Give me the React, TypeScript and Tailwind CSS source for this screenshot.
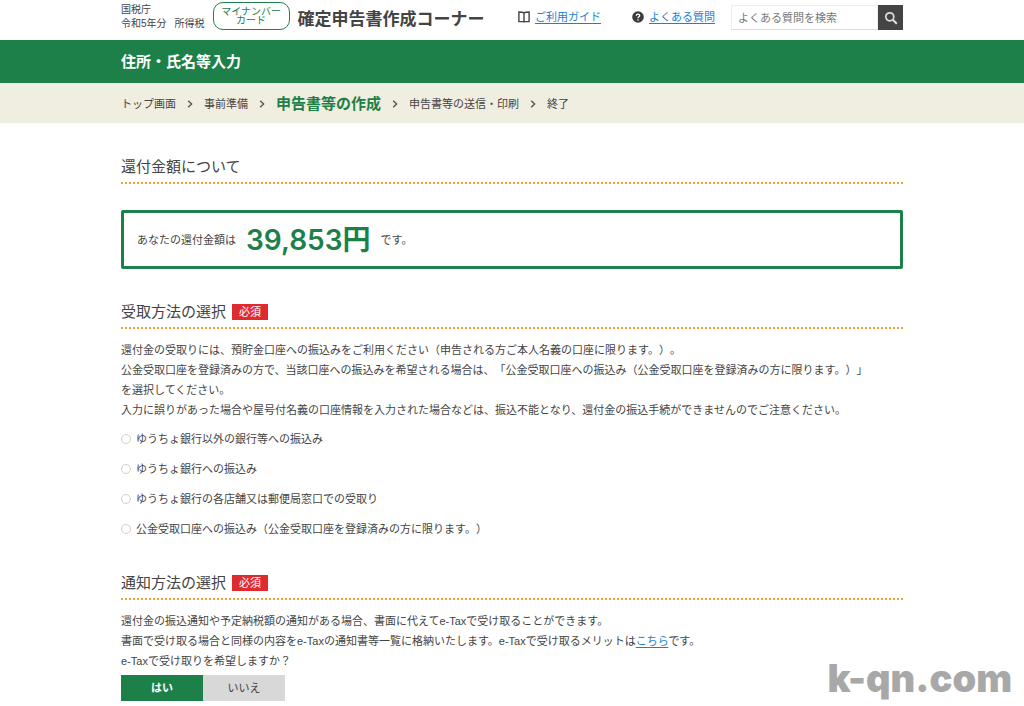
import { useState } from "react";
import type { ReactNode } from "react";

const STEPS = ["トップ画面", "事前準備", "申告書等の作成", "申告書等の送信・印刷", "終了"];
const CURRENT_STEP = 2;

const RECEIVE_METHODS = [
  "ゆうちょ銀行以外の銀行等への振込み",
  "ゆうちょ銀行への振込み",
  "ゆうちょ銀行の各店舗又は郵便局窓口での受取り",
  "公金受取口座への振込み（公金受取口座を登録済みの方に限ります。）",
];

function Container({ children, className = "" }: { children: ReactNode; className?: string }) {
  return <div className={`mx-auto w-full max-w-[782px] ${className}`}>{children}</div>;
}

function BookIcon() {
  return (
    <svg width="12" height="12" viewBox="0 0 12 12" fill="none" stroke="#444" strokeWidth="1.4" aria-hidden="true">
      <path d="M6 2C5.2 1.2 4 1 0.9 1V10.6H4.4C5.4 10.6 6 11 6 11.6C6 11 6.6 10.6 7.6 10.6H11.1V1C8 1 6.8 1.2 6 2ZM6 2V11.6" />
    </svg>
  );
}

function QuestionIcon() {
  return (
    <svg width="12" height="12" viewBox="0 0 12 12" aria-hidden="true">
      <circle cx="6" cy="6" r="5.8" fill="#3c3c3c" />
      <path d="M4.3 4.7C4.3 2.6 7.7 2.6 7.7 4.6C7.7 5.8 6 5.8 6 7.2" fill="none" stroke="#fff" strokeWidth="1.3" />
      <circle cx="6" cy="9" r="0.8" fill="#fff" />
    </svg>
  );
}

function SearchIcon() {
  return (
    <svg width="14" height="14" viewBox="0 0 14 14" fill="none" stroke="#dedede" aria-hidden="true">
      <circle cx="5.8" cy="5.8" r="4" strokeWidth="1.7" />
      <path d="M8.8 8.8L12.8 12.8" strokeWidth="2.2" />
    </svg>
  );
}

function Chevron() {
  return (
    <svg width="6" height="8" viewBox="0 0 6 8" fill="none" stroke="#555" strokeWidth="1.4" aria-hidden="true">
      <path d="M1.2 0.8L4.6 4L1.2 7.2" />
    </svg>
  );
}

function SectionTitle({ children, required }: { children: ReactNode; required?: boolean }) {
  return (
    <h2 className="flex items-center gap-[6px] border-b-2 border-dotted border-[#efa136] pb-[3px] text-[15px] leading-6">
      {children}
      {required && (
        <span className="bg-[#df2b2f] px-[7px] text-[11px] leading-4 text-white">必須</span>
      )}
    </h2>
  );
}

export default function App() {
  const [method, setMethod] = useState<string | null>(null);
  const [notify, setNotify] = useState(true);

  return (
    <div className="relative bg-white font-['Liberation_Sans','Noto_Sans_CJK_JP',sans-serif] text-[11px] leading-5 text-[#444] [text-spacing-trim:space-all]">
      <header>
        <Container className="flex h-10 items-start">
          <div className="pt-[3px] text-[10px] leading-[14px]">
            <p>国税庁</p>
            <p className="flex gap-2">
              <span>令和5年分</span>
              <span>所得税</span>
            </p>
          </div>
          <p className="mt-[2px] ml-2 flex h-7 w-[77px] flex-col items-center justify-center rounded-[10px] border border-[#1d8049] text-[10px] leading-[9px] text-[#1d8049]">
            <span>マイナンバー</span>
            <span>カード</span>
          </p>
          <h1 className="ml-2 pt-2 text-[17px] leading-6 font-bold">確定申告書作成コーナー</h1>
          <div className="ml-auto flex items-start">
            <nav className="flex gap-[31px] pt-[7px] text-[#1a80d0]">
              <a href="#guide" className="flex items-center gap-[5px]">
                <BookIcon />
                <span className="underline underline-offset-2">ご利用ガイド</span>
              </a>
              <a href="#faq" className="flex items-center gap-[5px]">
                <QuestionIcon />
                <span className="underline underline-offset-2">よくある質問</span>
              </a>
            </nav>
            <form className="mt-[5px] ml-4 flex" onSubmit={(e) => e.preventDefault()}>
              <input
                type="search"
                aria-label="よくある質問を検索"
                placeholder="よくある質問を検索"
                className="h-[25px] w-[147px] border border-[#eee] border-b-[#ddd] px-[6px] placeholder:text-[#777]"
              />
              <button type="submit" aria-label="検索" className="flex h-[25px] w-[25px] items-center justify-center bg-[#444]">
                <SearchIcon />
              </button>
            </form>
          </div>
        </Container>
      </header>

      <div className="bg-[#1d8049] py-[9px] text-[15px] leading-[25px] font-bold text-white">
        <Container>住所・氏名等入力</Container>
      </div>

      <nav className="bg-[#f0eee1]">
        <Container>
          <ol className="flex h-10 items-center gap-[11px] pt-[2px]">
            {STEPS.map((step, i) => (
              <li key={step} className="flex items-center gap-[11px]">
                {i > 0 && <Chevron />}
                <span className={i === CURRENT_STEP ? "text-[15px] font-bold text-[#1d8049]" : ""}>{step}</span>
              </li>
            ))}
          </ol>
        </Container>
      </nav>

      <main>
        <Container className="pt-8">
          <SectionTitle>還付金額について</SectionTitle>
          <p className="mt-[26px] flex h-[59px] items-center rounded-[2px] border-[3px] border-[#1d8049] px-[13px]">
            あなたの還付金額は
            <strong className="mx-[10px] font-['Inter','Noto_Sans_CJK_JP',sans-serif] text-[28px] leading-9 font-semibold text-[#1d8049]">
              39,853円
            </strong>
            です。
          </p>

          <section className="mt-[31px]">
            <SectionTitle required>受取方法の選択</SectionTitle>
            <p className="mt-[11px]">
              還付金の受取りには、預貯金口座への振込みをご利用ください（申告される方ご本人名義の口座に限ります。）。
              <br />
              公金受取口座を登録済みの方で、当該口座への振込みを希望される場合は、「公金受取口座への振込み（公金受取口座を登録済みの方に限ります。）」
              <br />
              を選択してください。
              <br />
              入力に誤りがあった場合や屋号付名義の口座情報を入力された場合などは、振込不能となり、還付金の振込手続ができませんのでご注意ください。
            </p>
            <div className="mt-[9px] flex flex-col gap-[10px]">
              {RECEIVE_METHODS.map((label) => (
                <label key={label} className="flex items-center gap-[5px]">
                  <input
                    type="radio"
                    name="method"
                    checked={method === label}
                    onChange={() => setMethod(label)}
                    className="size-[10px] appearance-none rounded-full border border-[#d0d0d0] bg-white checked:border-[3px] checked:border-[#1d8049]"
                  />
                  {label}
                </label>
              ))}
            </div>
          </section>

          <section className="mt-8">
            <SectionTitle required>通知方法の選択</SectionTitle>
            <p className="mt-[11px]">
              還付金の振込通知や予定納税額の通知がある場合、書面に代えてe-Taxで受け取ることができます。
              <br />
              書面で受け取る場合と同様の内容をe-Taxの通知書等一覧に格納いたします。e-Taxで受け取るメリットは
              <a href="#merit" className="text-[#1a80d0] underline underline-offset-2">こちら</a>
              です。
              <br />
              e-Taxで受け取りを希望しますか？
            </p>
            <div className="mt-[4px] flex">
              <button
                type="button"
                aria-pressed={notify}
                onClick={() => setNotify(true)}
                className={`h-[26px] w-[82px] ${notify ? "bg-[#1d8049] font-bold text-white" : "bg-[#d8d8d8]"}`}
              >
                はい
              </button>
              <button
                type="button"
                aria-pressed={!notify}
                onClick={() => setNotify(false)}
                className={`h-[26px] w-[82px] ${notify ? "bg-[#d8d8d8]" : "bg-[#1d8049] font-bold text-white"}`}
              >
                いいえ
              </button>
            </div>
          </section>
        </Container>
      </main>

      <p className="absolute right-3 bottom-0 font-['Inter',sans-serif] text-[38px] leading-[46px] font-black text-[#a8a8a8]">
        k-qn.com
      </p>
    </div>
  );
}
